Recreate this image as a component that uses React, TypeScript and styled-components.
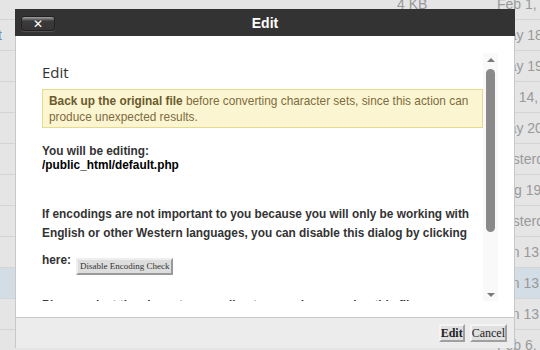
import React from "react";
import styled, { createGlobalStyle } from "styled-components";

type FileRow = {
  name: string;
  size: string;
  modified: string;
  selected?: boolean;
};

const rows: FileRow[] = [
  { name: "", size: "4 KB", modified: "Feb 1, 2024" },
  { name: "t", size: "4 KB", modified: "May 18, 2023" },
  { name: "", size: "4 KB", modified: "May 19, 2023" },
  { name: "", size: "4 KB", modified: "Jul 14, 2022" },
  { name: "", size: "4 KB", modified: "May 20, 2023" },
  { name: "", size: "4 KB", modified: "Yesterday" },
  { name: "", size: "4 KB", modified: "Aug 19, 2023" },
  { name: "", size: "4 KB", modified: "Yesterday" },
  { name: "", size: "4 KB", modified: "Jan 13, 2024" },
  { name: "", size: "4 KB", modified: "Jan 13, 2024", selected: true },
  { name: "", size: "4 KB", modified: "Jan 13, 2024" },
  { name: "", size: "", modified: "Feb 6, 2024" },
];

const App: React.FC = () => {
  return (
    <>
      <GlobalStyle />
      <Page>
        <FileTable>
          {rows.map((row, i) => (
            <TableRow key={i} selected={row.selected}>
              <NameCell>{row.name}</NameCell>
              <Cell>{row.size}</Cell>
              <Cell>{row.modified}</Cell>
            </TableRow>
          ))}
        </FileTable>

        <Dialog>
          <TitleBar>
            <CloseButton aria-label="close">✕</CloseButton>
            <Title>Edit</Title>
          </TitleBar>
          <Body>
            <Content>
              <Heading>Edit</Heading>
              <Warning>
                <strong>Back up the original file</strong> before converting character sets, since this
                action can produce unexpected results.
              </Warning>
              <Editing>
                You will be editing:
                <br />
                <Path>/public_html/default.php</Path>
              </Editing>
              <Notice>
                If encodings are not important to you because you will only be working with English or
                other Western languages, you can disable this dialog by clicking
              </Notice>
              <HereRow>
                <span>here:</span>
                <SmallButton>Disable Encoding Check</SmallButton>
              </HereRow>
              <Notice>Please select the character encoding to use when opening this file.</Notice>
              <EncodingSelect defaultValue="utf-8">
                <option value="utf-8">utf-8</option>
              </EncodingSelect>
            </Content>
            <ScrollTrack>
              <Arrow dir="up" />
              <ThumbArea>
                <Thumb />
              </ThumbArea>
              <Arrow dir="down" />
            </ScrollTrack>
          </Body>
          <Footer>
            <FooterButton bold>Edit</FooterButton>
            <FooterButton>Cancel</FooterButton>
          </Footer>
        </Dialog>
      </Page>
    </>
  );
};

const GlobalStyle = createGlobalStyle`
  html, body {
    margin: 0;
    padding: 0;
    background: #e3e3e3;
    font-family: "Liberation Sans", Arial, sans-serif;
    overflow: hidden;
  }
`;

const Page = styled.div`
  position: relative;
  width: 540px;
  height: 350px;
  overflow: hidden;
`;

const FileTable = styled.div`
  display: flex;
  flex-direction: column;
  margin-top: -11px;
`;

const TableRow = styled.div<{ selected?: boolean }>`
  display: grid;
  grid-template-columns: 397px 100px 1fr;
  align-items: center;
  height: 30px;
  border-bottom: 1px solid #d4d4d4;
  background: ${({ selected }) => (selected ? "#d3dde5" : "#e5e5e5")};
  font-size: 14px;
  color: #999;
  white-space: nowrap;
`;

const Cell = styled.div`
  overflow: hidden;
`;

const NameCell = styled(Cell)`
  color: #6d8db0;
  margin-left: -2px;
`;

const Dialog = styled.div`
  position: absolute;
  left: 15px;
  top: 9px;
  width: 500px;
  height: 339px;
  display: flex;
  flex-direction: column;
`;

const TitleBar = styled.div`
  height: 27px;
  background: #333;
  display: grid;
  grid-template-columns: 1fr auto 1fr;
  align-items: center;
`;

const CloseButton = styled.button`
  grid-column: 1;
  grid-row: 1;
  justify-self: start;
  margin-left: 6px;
  margin-top: 2px;
  width: 34px;
  height: 15px;
  padding: 0;
  border: 1px solid #222;
  border-radius: 3px;
  background: linear-gradient(#a0a0a0 0, #707070 2px, #3d3a3a 4px, #363434 100%);
  box-shadow: 0 1px 1px #555;
  color: #fff;
  font-family: "DejaVu Sans", sans-serif;
  font-weight: bold;
  font-size: 12px;
  line-height: 12px;
`;

const Title = styled.div`
  grid-column: 2;
  grid-row: 1;
  color: #fff;
  font-weight: bold;
  font-size: 14px;
`;

const Body = styled.div`
  flex: 1;
  min-height: 0;
  background: #fff;
  border-left: 1px solid #c8c8c8;
  border-right: 1px solid #c8c8c8;
  padding: 17px 16px 16px 26px;
  display: flex;
`;

const Content = styled.div`
  flex: 1;
  min-width: 0;
  overflow: hidden;
  color: #333;
  font-size: 11.85px;
`;

const ScrollTrack = styled.div`
  width: 15px;
  flex: none;
  background: #f9f9f9;
  display: flex;
  flex-direction: column;
  align-items: center;
`;

const Arrow = styled.div<{ dir: "up" | "down" }>`
  flex: none;
  height: 15px;
  width: 15px;
  display: flex;
  justify-content: center;
  align-items: center;

  &::before {
    content: "";
    width: 0;
    height: 0;
    border-left: 4px solid transparent;
    border-right: 4px solid transparent;
    ${({ dir }) =>
      dir === "up"
        ? "border-bottom: 4px solid #7a7a7a; margin-top: -1px;"
        : "border-top: 4px solid #7a7a7a; margin-top: 2px;"}
  }
`;

const ThumbArea = styled.div`
  flex: 1;
  width: 100%;
  display: flex;
  justify-content: center;
`;

const Thumb = styled.div`
  width: 9px;
  height: 163px;
  margin-top: 1px;
  border-radius: 5px;
  background: #8a8a8a;
`;

const Heading = styled.h3`
  margin: 9px 0 7px;
  font-family: "Open Sans", sans-serif;
  font-weight: normal;
  font-size: 15px;
  line-height: 20px;
  color: #333;
`;

const Warning = styled.div`
  background: #fcf5d2;
  border: 1px solid #e8da8c;
  padding: 3px 6px 2px;
  line-height: 16px;
  color: #7d6c3d;

  strong {
    color: #6a5a2c;
  }
`;

const Editing = styled.p`
  margin: 16px 0 0;
  font-weight: bold;
  line-height: 14px;
`;

const Path = styled.span`
  color: #000;
`;

const Notice = styled.p`
  margin: 33px 0 0;
  font-weight: bold;
  line-height: 19px;
`;

const HereRow = styled.div`
  display: flex;
  align-items: flex-start;
  gap: 5px;
  margin-top: 8px;
  font-weight: bold;
  line-height: 19px;
  margin-bottom: -12px;
`;

const SmallButton = styled.button`
  margin-top: 7px;
  font-family: "Liberation Serif", serif;
  font-size: 9px;
  line-height: 11px;
  padding: 1px 2px;
  background: #ddd;
  border: 2px outset #eee;
  color: #333;
`;

const EncodingSelect = styled.select`
  margin: 10px 0 40px;
  font-size: 12px;
`;

const Footer = styled.div`
  height: 30px;
  background: #ececec;
  border: 1px solid #c8c8c8;
  border-bottom: none;
  display: flex;
  justify-content: flex-end;
  align-items: center;
  gap: 5px;
  padding-right: 7px;
`;

const FooterButton = styled.button<{ bold?: boolean }>`
  height: 18px;
  padding: 0;
  font-family: "Liberation Serif", serif;
  font-size: 12px;
  font-weight: ${({ bold }) => (bold ? "bold" : "normal")};
  line-height: 13px;
  color: #222;
  background: #e0e0e0;
  border: 2px outset #f4f4f4;
`;

export default App;
